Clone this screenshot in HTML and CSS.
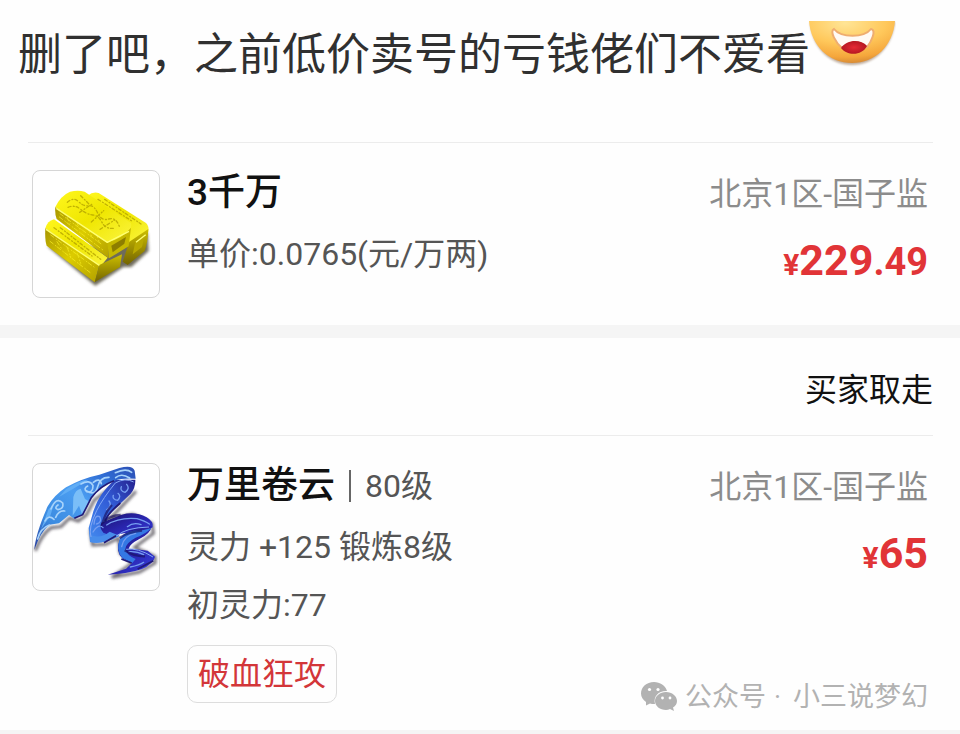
FILE: index.html
```html
<!DOCTYPE html>
<html lang="zh-CN">
<head>
<meta charset="utf-8">
<meta name="viewport" content="width=device-width, initial-scale=1">
<title>交易记录</title>
<link rel="stylesheet" href="styles.css">
</head>
<body>
<main>
  <header class="comment">
    <p>删了吧，之前低价卖号的亏钱佬们不爱看</p>
    <svg class="smile" viewBox="0 0 88 48" aria-hidden="true">
      <defs>
        <radialGradient id="face" cx="0.42" cy="0.05" r="0.95">
          <stop offset="0" stop-color="#ffe596"/><stop offset="0.5" stop-color="#ffc85b"/><stop offset="0.85" stop-color="#f5a63b"/><stop offset="1" stop-color="#d98c35"/>
        </radialGradient>
        <radialGradient id="tongue"><stop offset="0" stop-color="#e52a35"/><stop offset="1" stop-color="#b51722"/></radialGradient>
        <filter id="soft" x="-10%" y="-10%" width="120%" height="120%"><feGaussianBlur stdDeviation="1"/></filter>
      </defs>
      <path d="M2 1C4 27 22 44 44 44S84 27 87 1Z" fill="#8b6c50" opacity=".55" filter="url(#soft)"/>
      <path d="M1 0C3 25 21 42 44 42S85 25 87 0Z" fill="url(#face)"/>
      <path d="M26 8C33 17 56 17 63 8C69 9 63 21 59 26Q46 16 34 27C28 22 21 10 26 8Z" fill="#fffaf5" stroke="#efad70" stroke-width="2"/>
      <path d="M33 27C39 18 53 18 59 25C54 35 39 35 33 27Z" fill="url(#tongue)"/>
    </svg>
  </header>

  <section class="order">
    <article class="item">
      <div class="thumb">
        <svg viewBox="41 34 378 378" role="img" aria-label="金条">
          <defs>
            <linearGradient id="gtop" x1="0" y1="0" x2="1" y2="1"><stop offset="0" stop-color="#fff71e"/><stop offset=".5" stop-color="#efe600"/><stop offset="1" stop-color="#fbf540"/></linearGradient>
            <linearGradient id="gside" x1="0" y1="0" x2="1" y2="1"><stop offset="0" stop-color="#a99700"/><stop offset=".5" stop-color="#dccc00"/><stop offset="1" stop-color="#b3a100"/></linearGradient>
            <linearGradient id="gend" x1="0" y1="0" x2="0" y2="1"><stop offset="0" stop-color="#cdbf00"/><stop offset="1" stop-color="#736400"/></linearGradient>
            <filter id="sh" x="-20%" y="-20%" width="140%" height="140%"><feGaussianBlur stdDeviation="5"/></filter>
          </defs>
          <path d="M84 260L228 378L312 322L336 322L388 274L385 220L250 260Z" fill="#4b4630" opacity=".8" filter="url(#sh)"/>
          <path d="M205 108Q220 95 238 100L380 190Q390 200 387 216L330 250Z" fill="url(#gtop)"/>
          <path d="M330 246L387 208Q386 246 376 274L325 316L310 306Z" fill="url(#gend)"/>
          <path d="M348 246L376 226L368 262L340 284Z" fill="#b8a800"/>
          <path d="M78 206Q84 184 104 179L265 294L242 322Z" fill="url(#gtop)"/>
          <path d="M78 206L240 316L226 368L82 258Q76 240 78 206Z" fill="url(#gside)"/>
          <path d="M240 316L308 284L302 322L226 368Z" fill="url(#gend)"/>
          <path d="M108 142L266 242L268 296L112 178Q106 164 108 142Z" fill="url(#gside)"/>
          <path d="M108 142Q124 108 152 96Q176 90 196 96L335 190Q338 204 328 220Q300 244 264 250Z" fill="url(#gtop)"/>
          <path d="M264 248Q310 236 335 204L328 260L269 296Z" fill="#c6b800"/>
          <path d="M276 258L320 232L315 252L280 278Z" fill="#8d7e00"/>
          <g fill="none" stroke="#b5a500" stroke-width="4" stroke-linecap="round" stroke-dasharray="9 7 3 6" opacity=".8">
            <path d="M144 128Q163 111 178 126T208 138T235 160T268 178T300 200"/>
            <path d="M146 143Q166 134 184 149T220 166T248 188T282 206"/>
            <path d="M184 108L211 135M181 158L217 134M216 187L253 153M242 209L286 181"/>
            <path d="M236 119L339 185M256 119L365 193M104 204L218 289M123 204L244 299"/>
          </g>
          <g fill="none" stroke="#f8ef22" stroke-width="3" stroke-linecap="round" stroke-dasharray="12 8 3 5" opacity=".7">
            <path d="M122 162L250 256M120 172L252 272M94 226L224 322M92 245L218 343"/>
            <path d="M143 173l9 18m20-4l9 21m25 0l10 20m15-5l8 22M113 246l13 20m18-2l10 27m20-9l10 29"/>
          </g>
          <path d="M111 146L264 248L329 215M80 209L240 317M350 248L379 225" fill="none" stroke="#ffff72" stroke-width="4" stroke-linejoin="round"/>
        </svg>
      </div>
      <div class="info">
        <h2>3千万</h2>
        <p class="first">单价:0.0765(元/万两)</p>
      </div>
      <div class="side">
        <p class="server">北京1区-国子监</p>
        <p class="price"><span class="yen">¥</span>229<span class="cents">.49</span></p>
      </div>
    </article>
  </section>

  <section class="order">
    <p class="status">买家取走</p>
    <article class="item">
      <div class="thumb">
        <svg viewBox="41 28 378 378" role="img" aria-label="飘带">
          <defs>
            <linearGradient id="blue" x1="0" y1="1" x2="1" y2="0"><stop offset="0" stop-color="#263d9f"/><stop offset=".25" stop-color="#3c8be0"/><stop offset=".55" stop-color="#4b9ef2"/><stop offset=".8" stop-color="#2e6ad2"/><stop offset="1" stop-color="#2d4eb3"/></linearGradient>
            <linearGradient id="fold" x1="1" y1="0" x2="0" y2="1"><stop offset="0" stop-color="#25218f"/><stop offset=".45" stop-color="#315bd6"/><stop offset="1" stop-color="#448df0"/></linearGradient>
            <linearGradient id="deep" x1="0" y1="0" x2="1" y2="1"><stop offset="0" stop-color="#1a126c"/><stop offset=".5" stop-color="#2925ad"/><stop offset="1" stop-color="#363ddd"/></linearGradient>
            <filter id="sh2" x="-20%" y="-20%" width="140%" height="140%"><feGaussianBlur stdDeviation="4"/></filter>
          </defs>
          <path d="M48 288Q66 240 95 219L125 216L151 190L177 199L201 181L225 136L282 96L214 230L220 271L260 269L298 250L303 295L340 325L278 368L360 352L407 325L407 306L346 278L402 236L398 207L340 180L270 194L350 110" fill="none" stroke="#3d3943" stroke-width="9" opacity=".75" filter="url(#sh2)"/>
          <path d="M286 76C253 105 235 132 222 170L208 220L212 262Q252 270 300 244L266 218Q256 203 270 180L305 145L334 117Q349 99 348 75Z" fill="url(#fold)"/>
          <path d="M45 285C48 254 59 213 85 155Q104 122 140 98Q187 71 240 60L300 40Q339 29 346 48L349 72Q310 69 285 78Q242 95 218 128L190 180L165 192L149 181L119 206L90 210Q64 231 45 285Z" fill="url(#blue)"/>
          <path d="M246 204L307 180Q348 169 382 188Q404 201 400 218Q374 237 336 235Q302 233 283 246L252 234Q239 219 246 204Z" fill="url(#deep)"/>
          <path d="M302 254Q322 220 397 214Q394 237 360 253Q330 269 328 282Q356 284 385 288L407 306Q403 327 366 344Q321 359 265 360L320 342L338 325L310 312Q286 290 302 254Z" fill="url(#deep)"/>
          <path d="M302 251Q321 225 370 227L396 220Q380 238 349 249Q319 265 318 283Q323 303 349 313L339 325L309 310Q288 286 302 251Z" fill="#3478e4"/>
          <path d="M213 242Q246 252 271 231L300 243Q250 271 212 262Z" fill="#488deb"/>
          <path d="M184 102L197 133L211 141L188 179L179 153L160 183L162 127Q168 105 184 102Z" fill="#7abef8"/>
          <path d="M140 104Q178 77 207 75L167 99L119 127ZM88 163L103 151L93 183L65 224Z" fill="#60adf5"/>
          <g fill="none" stroke="#a7d3fb" stroke-width="5" stroke-linecap="round">
            <path d="M95 163Q111 124 130 145Q134 162 116 165Q103 160 116 151M109 188Q119 166 136 169M77 199Q87 179 104 194M55 253Q63 221 90 211"/>
            <path d="M185 88Q211 73 221 93Q221 116 202 111Q191 101 205 94M202 109Q228 125 235 96T269 68M222 83Q241 68 246 87M288 54Q320 39 337 53M289 69Q306 54 331 70"/>
          </g>
          <g fill="none" stroke="#759ef1" stroke-width="4" stroke-linecap="round">
            <path d="M322 89Q333 102 317 113Q301 109 306 96M296 116Q307 125 295 137Q278 134 282 122M269 139Q279 152 262 165M224 208Q226 179 241 186Q249 202 232 208M221 232Q238 205 251 219"/>
            <path d="M262 211Q299 187 353 192Q377 199 390 208M324 216Q342 202 365 210M307 276Q313 242 349 236M328 291Q353 289 373 300M333 337Q361 332 373 323"/>
          </g>
          <path d="M215 247Q206 220 232 168Q251 130 288 85Q318 68 343 82M292 244Q318 219 389 217M320 284Q355 278 401 307" fill="none" stroke="#85a9f5" stroke-width="3"/>
          <path d="M284 78Q243 93 216 129L190 180L165 191M257 199Q264 178 303 145M290 243L254 264M306 313L337 325M355 343L402 318" fill="none" stroke="#211a77" stroke-width="5"/>
          <path d="M278 151Q260 169 250 204Q273 181 304 181M301 250Q324 232 368 228M316 287Q345 306 377 305" fill="none" stroke="#18105f" stroke-width="7" opacity=".65"/>
        </svg>
      </div>
      <div class="info">
        <h2>万里卷云<span class="bar"></span><span class="level">80级</span></h2>
        <p class="first">灵力 +125 锻炼8级</p>
        <p class="second">初灵力:77</p>
        <span class="tag">破血狂攻</span>
      </div>
      <div class="side">
        <p class="server">北京1区-国子监</p>
        <p class="price"><span class="yen">¥</span>65</p>
        <p class="account">
          <svg viewBox="0 0 36 30" aria-hidden="true">
            <path d="M13 0C5.500 0 0 5 0 11.500C0 15 2 18 5 20V23.500L9 21.500Q11 22 13 22H14C12 14 18 8.500 26 9C24.500 3.500 19 0 13 0Z" fill="#b2b2b2"/>
            <path d="M25 10C19 10 14 14 14 19S19 28 25 28Q27 28 29 27L33 29L32 25.500C34.500 24 36 22 36 19C36 14 31 10 25 10Z" fill="#b2b2b2"/>
            <g fill="#fff"><circle cx="8.500" cy="7.500" r="1.600"/><circle cx="17" cy="7.500" r="1.600"/><circle cx="21.500" cy="16" r="1.400"/><circle cx="29" cy="16" r="1.400"/></g>
          </svg>
          <span>公众号</span><span class="dot">·</span><span>小三说梦幻</span>
        </p>
      </div>
    </article>
  </section>
</main>
</body>
</html>
```
FILE: styles.css
```css
* { box-sizing: border-box; }

body {
  margin: 0;
  background: #f5f5f5;
  color: #111;
  font-family: Roboto, "Noto Sans CJK SC", sans-serif;
  font-size: 32px;
  line-height: 40px;
}

h2, p { margin: 0; }

main {
  display: flex;
  flex-direction: column;
}

.comment {
  display: flex;
  align-items: flex-start;
  height: 142px;
  padding: 21px 18px 0;
  background: #fefefe;
  color: #303030;
  font-size: 44px;
  line-height: 68px;
  white-space: nowrap;
}

.smile {
  flex: none;
  width: 88px;
  height: 48px;
  margin-left: -2px;
}

.order {
  padding: 0 27px 0 28px;
  background: #fefefe;
}

.order + .order { margin-top: 13px; }

.status {
  height: 97px;
  padding-top: 32px;
  text-align: right;
}

.item {
  display: flex;
  gap: 27px;
  padding: 27px 5px 27px 4px;
  border-top: 1px solid #ececec;
}

.thumb {
  flex: none;
  width: 128px;
  height: 128px;
  border: 1px solid #d6d6d6;
  border-radius: 8px;
  background: #fff;
}

.thumb svg { display: block; }

.info {
  flex: 1;
  color: #555;
}

h2 {
  display: flex;
  align-items: center;
  height: 46px;
  color: #111;
  font-size: 37px;
  font-weight: 500;
}

.bar {
  width: 2px;
  height: 32px;
  margin: 0 14px;
  background: #666;
}

.level {
  color: #555;
  font-size: 32px;
  font-weight: 400;
}

.first { margin-top: 18px; }
.second { margin-top: 18px; }

.tag {
  display: inline-block;
  margin-top: 20px;
  padding: 8px 10px;
  border: 1px solid #ddd;
  border-radius: 10px;
  color: #d33639;
}

.side {
  display: flex;
  flex-direction: column;
  align-items: flex-end;
}

.server {
  padding-top: 4px;
  color: #8c8c8c;
}

.price {
  margin-top: 22px;
  color: #e13437;
  font-size: 43px;
  font-weight: 700;
  line-height: 48px;
}

.yen { font-size: 30px; }
.cents { font-size: 38px; }

.account {
  display: flex;
  align-items: center;
  gap: 8px;
  margin: auto 0 -14px;
  color: #b2b2b2;
  font-size: 27px;
}

.account svg {
  width: 36px;
  height: 30px;
}

.dot { margin-right: 4px; }
```
